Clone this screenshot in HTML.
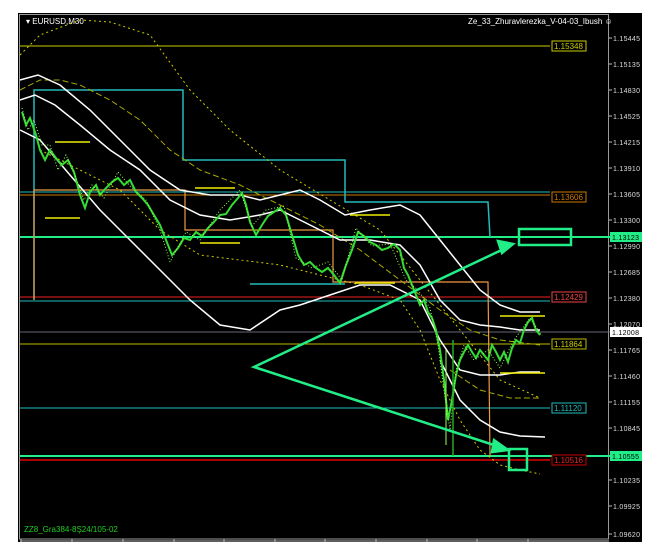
<!DOCTYPE html><html><head><style>
html,body{margin:0;padding:0;background:#fff;width:656px;height:556px;overflow:hidden}
svg{position:absolute;left:0;top:0}
text{font-family:"Liberation Sans",sans-serif;font-size:8px}
.ax text{font-size:7px}
</style></head><body>
<svg width="656" height="556" viewBox="0 0 656 556">
<rect x="18" y="13" width="624" height="529" fill="#000"/>
<rect x="19.5" y="14.5" width="589" height="524.5" fill="none" stroke="#999" stroke-width="1"/>
<g stroke="#bbb"><line x1="20" y1="541" x2="609" y2="541"/>
<line x1="21" y1="539" x2="21" y2="542"/><line x1="72" y1="539" x2="72" y2="542"/><line x1="123" y1="539" x2="123" y2="542"/><line x1="174" y1="539" x2="174" y2="542"/><line x1="224" y1="539" x2="224" y2="542"/><line x1="275" y1="539" x2="275" y2="542"/><line x1="325" y1="539" x2="325" y2="542"/><line x1="376" y1="539" x2="376" y2="542"/><line x1="427" y1="539" x2="427" y2="542"/><line x1="477" y1="539" x2="477" y2="542"/><line x1="528" y1="539" x2="528" y2="542"/>
</g>
<g stroke="#bbb">
<line x1="609" y1="38" x2="612" y2="38"/><line x1="609" y1="64" x2="612" y2="64"/><line x1="609" y1="90" x2="612" y2="90"/><line x1="609" y1="116" x2="612" y2="116"/><line x1="609" y1="142" x2="612" y2="142"/><line x1="609" y1="168" x2="612" y2="168"/><line x1="609" y1="194" x2="612" y2="194"/><line x1="609" y1="220" x2="612" y2="220"/><line x1="609" y1="246" x2="612" y2="246"/><line x1="609" y1="272" x2="612" y2="272"/><line x1="609" y1="298" x2="612" y2="298"/><line x1="609" y1="324" x2="612" y2="324"/><line x1="609" y1="350" x2="612" y2="350"/><line x1="609" y1="376" x2="612" y2="376"/><line x1="609" y1="402" x2="612" y2="402"/><line x1="609" y1="428" x2="612" y2="428"/><line x1="609" y1="480" x2="612" y2="480"/><line x1="609" y1="506" x2="612" y2="506"/><line x1="609" y1="534" x2="612" y2="534"/>
</g>
<g fill="#ddd" class="ax">
<text x="613" y="41" textLength="27">1.15445</text><text x="613" y="67" textLength="27">1.15135</text><text x="613" y="93" textLength="27">1.14830</text>
<text x="613" y="119" textLength="27">1.14525</text><text x="613" y="145" textLength="27">1.14215</text><text x="613" y="171" textLength="27">1.13910</text>
<text x="613" y="197" textLength="27">1.13605</text><text x="613" y="223" textLength="27">1.13300</text><text x="613" y="249" textLength="27">1.12990</text>
<text x="613" y="275" textLength="27">1.12685</text><text x="613" y="301" textLength="27">1.12380</text><text x="613" y="327" textLength="27">1.12070</text>
<text x="613" y="353" textLength="27">1.11765</text><text x="613" y="379" textLength="27">1.11460</text><text x="613" y="405" textLength="27">1.11155</text>
<text x="613" y="431" textLength="27">1.10845</text><text x="613" y="483" textLength="27">1.10235</text><text x="613" y="509" textLength="27">1.09925</text>
<text x="613" y="537" textLength="27">1.09620</text>
</g>
<text x="26" y="24" fill="#fff">▾ EURUSD,M30</text>
<text x="468" y="24" fill="#fff">Ze_33_Zhuravlerezka_V-04-03_Ibush ☺</text>
<text x="24" y="532" fill="#2c2" font-size="7">ZZ8_Gra384-8Ş24/105-02</text>
<line x1="20" y1="46" x2="550" y2="46" stroke="#cc0"/>
<rect x="552" y="41" width="34" height="10" fill="#000" stroke="#cc0"/><text x="554" y="49" fill="#cc0">1.15348</text>
<line x1="20" y1="192" x2="550" y2="192" stroke="#2bb"/>
<line x1="20" y1="195" x2="550" y2="195" stroke="#c70"/>
<rect x="552" y="192" width="34" height="10" fill="#000" stroke="#c70"/><text x="554" y="200" fill="#c70">1.13606</text>
<line x1="20" y1="237" x2="610" y2="237" stroke="#2e8" stroke-width="2"/>
<g class="ax">
<rect x="610" y="232" width="32" height="10" fill="#2e8"/><text x="612" y="240" fill="#000" textLength="27">1.13123</text>
<rect x="610" y="327" width="32" height="10" fill="#fff"/><text x="612" y="335" fill="#000" textLength="27">1.12008</text>
<rect x="610" y="451" width="32" height="10" fill="#2e8"/><text x="612" y="459" fill="#000" textLength="27">1.10555</text>
</g>
<line x1="20" y1="297" x2="550" y2="297" stroke="#e22"/>
<line x1="20" y1="301" x2="550" y2="301" stroke="#2bb"/>
<rect x="552" y="292" width="34" height="10" fill="#000" stroke="#e44"/><text x="554" y="300" fill="#e44">1.12429</text>
<line x1="20" y1="332" x2="610" y2="332" stroke="#667"/>
<line x1="20" y1="344" x2="550" y2="344" stroke="#bb0"/>
<rect x="552" y="339" width="34" height="10" fill="#000" stroke="#bb0"/><text x="554" y="347" fill="#cc0">1.11864</text>
<line x1="20" y1="408" x2="550" y2="408" stroke="#2bb"/>
<rect x="552" y="403" width="34" height="10" fill="#000" stroke="#2bb"/><text x="554" y="411" fill="#2bb">1.11120</text>
<line x1="20" y1="456" x2="610" y2="456" stroke="#2e8" stroke-width="2"/>
<line x1="20" y1="460" x2="550" y2="460" stroke="#a00" stroke-width="2"/>
<rect x="552" y="455" width="34" height="10" fill="#000" stroke="#c00"/><text x="554" y="463" fill="#e22">1.10516</text>
<polyline points="34,300 34,90 183,90 183,160 345,160 345,202 488,202 490,237" fill="none" stroke="#2bb" stroke-width="1.5"/>
<polyline points="250,284 345,284" stroke="#2bb" fill="none" stroke-width="1.5"/>
<polyline points="34,300 34,190 185,190 185,230 333,230 333,282 488,282 490,456" fill="none" stroke="#e94" stroke-width="1.2"/>
<polyline points="20,55 40,35 80,20 110,22 150,35 190,90 230,130 280,170 330,200 380,230 420,280 460,330 500,380 540,398" fill="none" stroke="#cc0" stroke-dasharray="2,3"/>
<polyline points="20,90 40,80 60,80 80,85 110,100 140,120 170,150 200,170 240,185 280,205 320,225 360,250 400,280 440,310 470,330 500,340 540,345" fill="none" stroke="#aa0" stroke-dasharray="6,3"/>
<polyline points="40,150 80,170 120,190 160,230 200,255 240,260 280,265 320,275 360,285 400,300 420,330 440,380 460,420 480,450 500,465 520,470 540,474" fill="none" stroke="#cc0" stroke-dasharray="2,3"/>
<polyline points="450,370 480,390 510,398 540,398" fill="none" stroke="#aa0" stroke-dasharray="6,3"/>
<polyline points="20,80 38,75 60,85 90,110 120,140 150,170 180,190 210,195 240,195 260,200 280,195 300,190 320,200 345,215 370,210 400,205 420,215 440,240 460,265 480,290 500,305 520,312 540,312" fill="none" stroke="#fff" stroke-width="1.5"/>
<polyline points="20,100 35,95 55,105 80,125 110,150 140,170 170,200 200,215 230,220 260,215 280,210 310,225 340,240 370,240 400,245 420,265 440,300 460,320 480,325 500,327 520,330 540,330" fill="none" stroke="#fff" stroke-width="1.5"/>
<polyline points="20,130 40,140 70,175 100,210 130,240 160,270 190,300 220,325 250,330 280,310 300,305 330,295 360,285 390,285 420,300 440,340 460,370 480,375 500,375 520,372 540,372" fill="none" stroke="#fff" stroke-width="1.5"/>
<polyline points="440,360 460,400 480,420 500,432 520,436 545,437" fill="none" stroke="#fff" stroke-width="1.5"/>
<g stroke="#ee0" stroke-width="1.5">
<line x1="55" y1="142" x2="90" y2="142"/><line x1="45" y1="218" x2="80" y2="218"/><line x1="195" y1="188" x2="235" y2="188"/>
<line x1="200" y1="243" x2="240" y2="243"/><line x1="350" y1="215" x2="390" y2="215"/><line x1="355" y1="283" x2="395" y2="283"/>
<line x1="500" y1="316" x2="545" y2="316"/><line x1="500" y1="373" x2="545" y2="373"/>
</g>
<polyline points="22,112 26,125 30,118 36,135 40,150 45,160 50,150 56,158 62,165 68,160 74,172 80,195 85,208 90,192 96,185 100,195 106,188 112,182 118,178 124,185 130,180 136,192 142,198 148,205 154,215 160,225 166,240 172,255 178,248 184,238 190,240 196,232 202,236 208,228 214,222 220,215 226,214 232,205 238,198 242,193 246,205 250,222 256,235 262,225 268,216 274,212 280,208 286,215 292,235 298,255 304,265 310,262 316,268 322,272 328,268 334,275 340,283 346,265 352,250 358,232 364,236 370,242 376,245 382,250 388,248 394,244 400,250 404,268 408,275 412,285 416,295 420,305 424,300 428,312 432,318 436,330 440,350 444,380 448,420 452,400 456,375 460,360 464,352 468,345 472,352 476,358 480,350 484,355 488,360 492,345 496,352 500,360 504,352 508,362 512,348 516,340 520,343 524,330 528,322 532,318 536,330 540,335" fill="none" stroke="#3d3" stroke-width="2"/>
<polyline points="22,108 28,130 34,120 42,145 50,145 58,170 66,155 76,178 84,200 92,185 104,198 118,172 130,186 146,200 160,230 170,262 186,232 200,240 220,210 240,190 252,226 266,210 284,206 296,258 312,268 328,262 342,280 356,228 372,246 390,244 406,280 418,290 430,308 438,345 444,390 450,430 456,370 464,345 474,360 488,350 500,368 514,340 530,318 542,336" fill="none" stroke="#9f5" stroke-width="1" stroke-dasharray="1,2"/>
<line x1="453" y1="340" x2="453" y2="456" stroke="#2a2" stroke-width="1.5"/>
<line x1="446" y1="350" x2="446" y2="445" stroke="#9f5" stroke-width="1"/>
<g stroke="#2e8" stroke-width="2.5" fill="none">
<polyline points="508,247 254,367 500,447"/>
<polygon points="513,244 498,241 502,253" fill="#2e8"/>
<polygon points="508,450 494,440 492,452" fill="#2e8"/>
<rect x="519" y="229" width="52" height="16"/>
<rect x="509" y="449" width="18" height="21"/>
</g>
</svg>
</body></html>
